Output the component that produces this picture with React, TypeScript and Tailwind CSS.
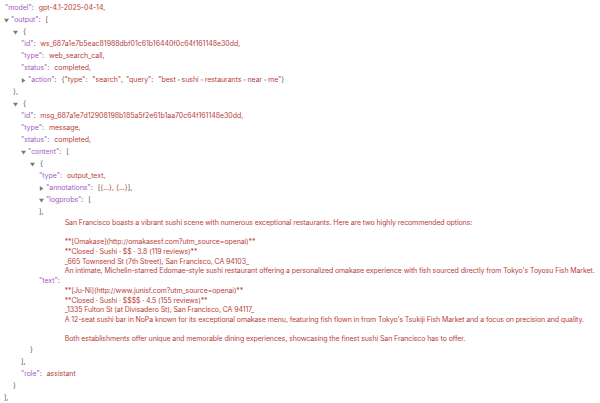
import React from 'react';

const KEY = 'text-[#a45cc4]';
const VAL = 'text-[#b9403b]';
const PUN = 'text-[#555555]';

const Arrow: React.FC<{ open?: boolean }> = ({ open }) => (
  <span className="inline-flex w-[7px] shrink-0 items-center">
    <svg width="5" height="5" viewBox="0 0 5 5" className="fill-[#7a7a7a]">
      {open ? <polygon points="0,0.8 5,0.8 2.5,4.4" /> : <polygon points="0.8,0 4.4,2.5 0.8,5" />}
    </svg>
  </span>
);

const Row: React.FC<{ pad: string; arrow?: 'open' | 'closed'; children: React.ReactNode }> = ({ pad, arrow, children }) => (
  <div className={`flex h-[12px] items-center whitespace-nowrap ${pad}`}>
    {arrow && <Arrow open={arrow === 'open'} />}
    {children}
  </div>
);

const Key: React.FC<{ name: string }> = ({ name }) => (
  <span className={`${KEY} mr-[5px]`}>
    "{name}"<span className={PUN}>:</span>
  </span>
);

const Dot = () => <span className="mx-[1px] text-[#c9c9c9]">▪</span>;

const textLines = [
  'San Francisco boasts a vibrant sushi scene with numerous exceptional restaurants. Here are two highly recommended options:',
  '',
  '**[Omakase](http://omakasesf.com?utm_source=openai)**',
  '**Closed · Sushi · $$ · 3.8 (119 reviews)**',
  '_665 Townsend St (7th Street), San Francisco, CA 94103_',
  "An intimate, Michelin-starred Edomae-style sushi restaurant offering a personalized omakase experience with fish sourced directly from Tokyo's Toyosu Fish Market.",
  '',
  '**[Ju-Ni](http://www.junisf.com?utm_source=openai)**',
  '**Closed · Sushi · $$$$ · 4.5 (155 reviews)**',
  '_1335 Fulton St (at Divisadero St), San Francisco, CA 94117_',
  "A 12-seat sushi bar in NoPa known for its exceptional omakase menu, featuring fish flown in from Tokyo's Tsukiji Fish Market and a focus on precision and quality.",
  '',
  'Both establishments offer unique and memorable dining experiences, showcasing the finest sushi San Francisco has to offer.',
];

export default function App() {
  return (
    <div className="h-[403px] w-[600px] overflow-hidden bg-white pt-[2px] text-[7px] tracking-[-0.04px] [font-family:Inter,'Noto_Sans',sans-serif]">
      <Row pad="pl-[5px]">
        <Key name="model" />
        <span className={VAL}>gpt-4.1-2025-04-14,</span>
      </Row>
      <Row pad="pl-[4px]" arrow="open">
        <Key name="output" />
        <span className={PUN}>[</span>
      </Row>
      <Row pad="pl-[13px]" arrow="open">
        <span className={`${PUN} ml-[3px]`}>{'{'}</span>
      </Row>
      <Row pad="pl-[21px]">
        <Key name="id" />
        <span className={VAL}>ws_687a1e7b5eac81988dbf01c61b16440f0c64f161148e30dd,</span>
      </Row>
      <Row pad="pl-[21px]">
        <Key name="type" />
        <span className={VAL}>web_search_call,</span>
      </Row>
      <Row pad="pl-[21px]">
        <Key name="status" />
        <span className={VAL}>completed,</span>
      </Row>
      <Row pad="pl-[21px]" arrow="closed">
        <Key name="action" />
        <span className={PUN}>{'{'}</span>
        <span className={VAL}>"type"</span>
        <span className={PUN}>:</span>
        <span className={`${VAL} ml-[5px]`}>"search"</span>
        <span className={PUN}>,</span>
        <span className={`${VAL} ml-[3px]`}>"query"</span>
        <span className={PUN}>:</span>
        <span className={`${VAL} ml-[5px]`}>
          "best<Dot />sushi<Dot />restaurants<Dot />near<Dot />me"
        </span>
        <span className={PUN}>{'}'}</span>
      </Row>
      <Row pad="pl-[13px]">
        <span className={PUN}>{'},'}</span>
      </Row>
      <Row pad="pl-[13px]" arrow="open">
        <span className={`${PUN} ml-[3px]`}>{'{'}</span>
      </Row>
      <Row pad="pl-[21px]">
        <Key name="id" />
        <span className={VAL}>msg_687a1e7d12908198b185a5f2e61b1aa70c64f161148e30dd,</span>
      </Row>
      <Row pad="pl-[21px]">
        <Key name="type" />
        <span className={VAL}>message,</span>
      </Row>
      <Row pad="pl-[21px]">
        <Key name="status" />
        <span className={VAL}>completed,</span>
      </Row>
      <Row pad="pl-[21px]" arrow="open">
        <Key name="content" />
        <span className={PUN}>[</span>
      </Row>
      <Row pad="pl-[30px]" arrow="open">
        <span className={`${PUN} ml-[3px]`}>{'{'}</span>
      </Row>
      <Row pad="pl-[39px]">
        <Key name="type" />
        <span className={VAL}>output_text,</span>
      </Row>
      <Row pad="pl-[39px]" arrow="closed">
        <Key name="annotations" />
        <span className={PUN}>[</span>
        <span className={VAL}>{'{...}'}</span>
        <span className={PUN}>,&nbsp;</span>
        <span className={VAL}>{'{...}'}</span>
        <span className={PUN}>],</span>
      </Row>
      <Row pad="pl-[39px]" arrow="open">
        <Key name="logprobs" />
        <span className={PUN}>[</span>
      </Row>
      <Row pad="pl-[39px]">
        <span className={PUN}>],</span>
      </Row>
      <div className="flex items-center pl-[39px]">
        <Key name="text" />
        <div className={`${VAL} whitespace-pre leading-[9.7px] tracking-[-0.1px]`}>
          {textLines.map((l, i) => (
            <div key={i} className="h-[9.7px]">
              {l}
            </div>
          ))}
        </div>
      </div>
      <Row pad="pl-[30px]">
        <span className={PUN}>{'}'}</span>
      </Row>
      <Row pad="pl-[21px]">
        <span className={PUN}>],</span>
      </Row>
      <Row pad="pl-[21px]">
        <Key name="role" />
        <span className={VAL}>assistant</span>
      </Row>
      <Row pad="pl-[13px]">
        <span className={PUN}>{'}'}</span>
      </Row>
      <Row pad="pl-[4px]">
        <span className={PUN}>],</span>
      </Row>
    </div>
  );
}
